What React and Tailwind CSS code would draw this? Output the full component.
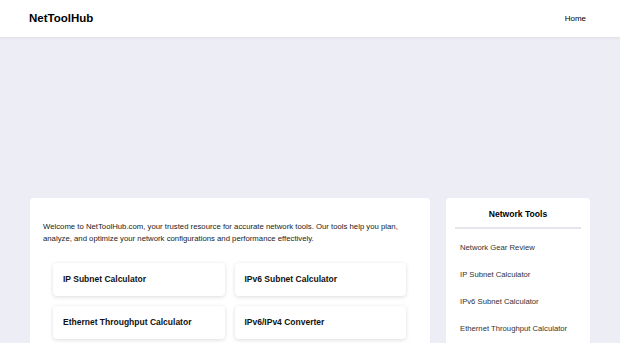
import React from "react";

const tools = [
  "IP Subnet Calculator",
  "IPv6 Subnet Calculator",
  "Ethernet Throughput Calculator",
  "IPv6/IPv4 Converter",
];

const sideLinks = [
  "Network Gear Review",
  "IP Subnet Calculator",
  "IPv6 Subnet Calculator",
  "Ethernet Throughput Calculator",
];

export default function App() {
  return (
    <div className="min-h-screen bg-[#ededf5] font-['Liberation_Sans',Arial,sans-serif] text-[#222]">
      {/* header */}
      <header className="h-[38px] bg-white border-b border-[#e2e2e8] shadow-[0_1px_2px_rgba(0,0,0,0.04)] flex items-center justify-between px-[29px]">
        <span className="text-[11.5px] font-bold text-black">NetToolHub</span>
        <a className="text-[8px] text-black mr-[5px]">Home</a>
      </header>

      {/* ad slot */}
      <div className="h-[160px]" />

      <div className="flex gap-[16px] px-[30px] items-start">
        {/* main card */}
        <main className="w-[400px] bg-white rounded-[4px] pt-[23px] px-[13px] pb-[20px]">
          <p className="text-[7.75px] leading-[12px] text-[#222]">
            Welcome to NetToolHub.com, your trusted resource for accurate network tools. Our tools help you plan,
            analyze, and optimize your network configurations and performance effectively.
          </p>
          <div className="grid grid-cols-2 gap-[10px] mt-[18px] ml-[10px] w-[353px]">
            {tools.map((t) => (
              <div
                key={t}
                className="h-[33px] bg-white rounded-[4px] shadow-[0_1px_4px_rgba(0,0,0,0.14)] flex items-center pl-[10px] text-[8.5px] font-bold text-[#111]"
              >
                {t}
              </div>
            ))}
          </div>
        </main>

        {/* sidebar */}
        <aside className="w-[144px] bg-white rounded-[4px] px-[9px] pt-[10px] pb-[10px]">
          <h3 className="text-center text-[8.6px] font-bold text-black leading-[12px]">Network Tools</h3>
          <div className="h-[2px] bg-[#e4e4ea] mt-[7px]" />
          <ul className="pl-[5px] mt-[13px] flex flex-col gap-[15px]">
            {sideLinks.map((l) => (
              <li key={l} className="text-[7.7px] leading-[12px] text-[#333]">
                {l}
              </li>
            ))}
          </ul>
        </aside>
      </div>
    </div>
  );
}
